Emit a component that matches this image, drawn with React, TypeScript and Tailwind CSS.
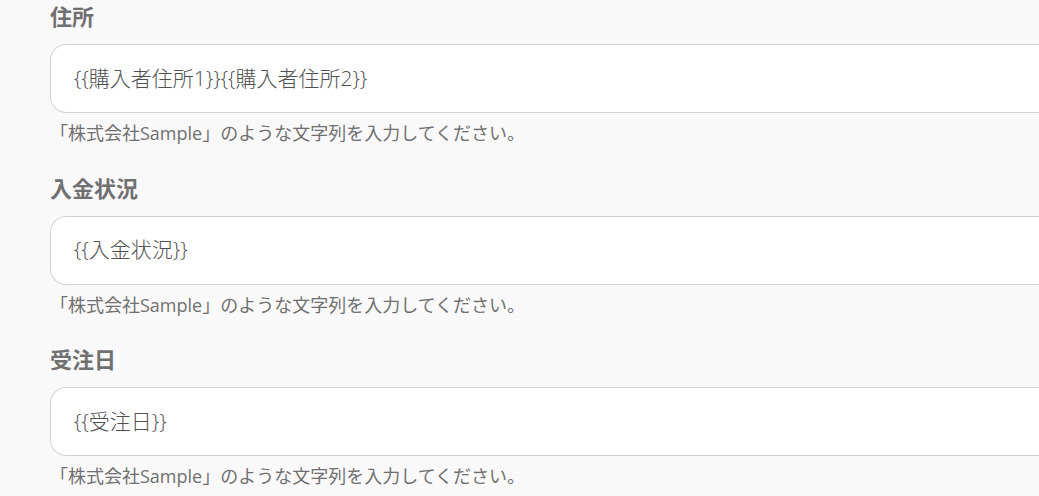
const FONT = '"Open Sans", "Noto Sans CJK JP", sans-serif';

const fields = [
  { label: '住所', value: '{{購入者住所1}}{{購入者住所2}}' },
  { label: '入金状況', value: '{{入金状況}}' },
  { label: '受注日', value: '{{受注日}}' },
];

function Field({ label, value }: { label: string; value: string }) {
  return (
    <div className="flex flex-col">
      <label className="text-[22px] font-bold leading-[28px] text-[#707070]">{label}</label>
      <div className="mt-[14px] flex h-[69px] w-[1040px] items-center rounded-l-[16px] border border-r-0 border-[#cfd4dc] bg-white pl-[23px]">
        <span className="text-[21px] font-light text-[#505050]">{value}</span>
      </div>
      <p className="mt-[8px] text-[18px] leading-[24px] text-[#707070]">
        「株式会社Sample」のような文字列を入力してください。
      </p>
    </div>
  );
}

export default function App() {
  return (
    <div className="h-[496px] w-[1039px] overflow-hidden bg-[#f9f9f9]" style={{ fontFamily: FONT }}>
      <div className="flex flex-col gap-[28.5px] pl-[50px] pt-[2px]">
        {fields.map((f) => (
          <Field key={f.label} label={f.label} value={f.value} />
        ))}
      </div>
    </div>
  );
}
